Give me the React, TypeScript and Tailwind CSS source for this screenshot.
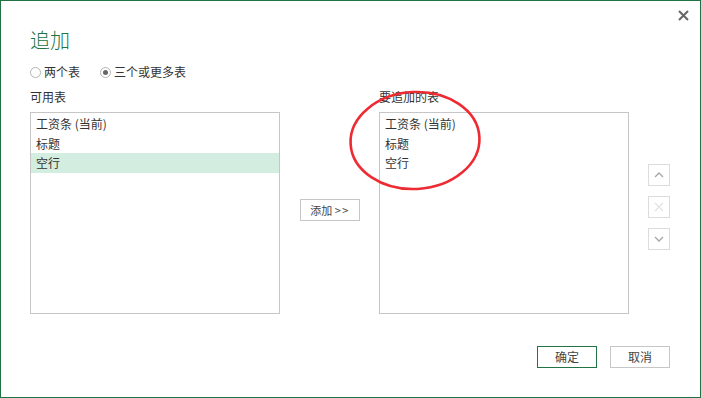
import React from 'react';

const font = "font-['Noto_Sans_CJK_SC','Noto_Sans',sans-serif]";

const tables = ['工资条 (当前)', '标题', '空行'];

function ListBox({ items, selected }: { items: string[]; selected?: number }) {
  return (
    <div className="mt-[7px] h-[202px] w-[250px] border border-[#c6c6c6] bg-white pt-px">
      {items.map((item, i) => (
        <div
          key={item}
          className={`h-[19.5px] pl-[5px] text-[12px] leading-[19px] text-[#333] ${
            i === selected ? 'bg-[#d3eee0]' : ''
          }`}
        >
          {item}
        </div>
      ))}
    </div>
  );
}

function Radio({ checked, label }: { checked?: boolean; label: string }) {
  return (
    <label className="flex items-center gap-[3px] text-[12px] text-[#333]">
      <span className="flex h-[11px] w-[11px] items-center justify-center rounded-full border border-[#b4b4b4] bg-white">
        {checked && <span className="h-[5px] w-[5px] rounded-full bg-[#666]" />}
      </span>
      {label}
    </label>
  );
}

function SideButton({ children }: { children: React.ReactNode }) {
  return (
    <div className="flex h-[22px] w-[22px] items-center justify-center border border-[#dcdcdc] bg-white">
      {children}
    </div>
  );
}

export default function App() {
  return (
    <div
      className={`relative flex h-[398px] w-[701px] flex-col border border-[#217346] bg-white pl-[29px] pr-[30px] ${font}`}
    >
      <svg className="absolute right-[11px] top-[9px]" width="11" height="11" viewBox="0 0 11 11">
        <path d="M1 1 L10 10 M10 1 L1 10" stroke="#666" strokeWidth="2" />
      </svg>

      <div className="mt-[25px] h-[28px] text-[20px] font-light leading-[28px] text-[#217346]">追加</div>

      <div className="mt-[9px] flex h-[18px] items-center gap-[20px]">
        <Radio label="两个表" />
        <Radio label="三个或更多表" checked />
      </div>

      <div className="mt-[8px] flex">
        <div className="flex flex-col">
          <div className="h-[16px] text-[12px] leading-[16px] text-[#333]">可用表</div>
          <ListBox items={tables} selected={2} />
        </div>

        <div className="w-[99px] pl-[20px] pt-[107px]">
          <button className="h-[22px] w-[60px] border border-[#c6c6c6] bg-white text-[11px] text-[#444]">
            添加 <span className="tracking-[1.5px]">&gt;&gt;</span>
          </button>
        </div>

        <div className="flex flex-col">
          <div className="h-[16px] text-[12px] leading-[16px] text-[#333]">要追加的表</div>
          <ListBox items={tables} />
        </div>

        <div className="ml-[19px] flex flex-col gap-[10px] pt-[75px]">
          <SideButton>
            <svg width="10" height="6" viewBox="0 0 10 6">
              <path d="M1 5 L5 1 L9 5" fill="none" stroke="#a6a6a6" strokeWidth="1.3" />
            </svg>
          </SideButton>
          <SideButton>
            <svg width="10" height="10" viewBox="0 0 10 10">
              <path d="M1 1 L9 9 M9 1 L1 9" stroke="#e2e2e2" strokeWidth="1.2" />
            </svg>
          </SideButton>
          <SideButton>
            <svg width="10" height="6" viewBox="0 0 10 6">
              <path d="M1 1 L5 5 L9 1" fill="none" stroke="#a6a6a6" strokeWidth="1.3" />
            </svg>
          </SideButton>
        </div>
      </div>

      <div className="mt-[32px] flex justify-end gap-[13px]">
        <button className="h-[22px] w-[60px] border border-[#217346] bg-white text-[12px] text-[#444]">
          确定
        </button>
        <button className="h-[22px] w-[60px] border border-[#c6c6c6] bg-white text-[12px] text-[#444]">
          取消
        </button>
      </div>

      <svg className="pointer-events-none absolute left-[346px] top-[88px]" width="136" height="103" viewBox="0 0 136 103">
        <ellipse
          cx="68"
          cy="51.5"
          rx="64.5"
          ry="48.5"
          fill="none"
          stroke="#ee2b33"
          strokeWidth="2.6"
          transform="rotate(-3 68 51.5)"
        />
      </svg>
    </div>
  );
}
